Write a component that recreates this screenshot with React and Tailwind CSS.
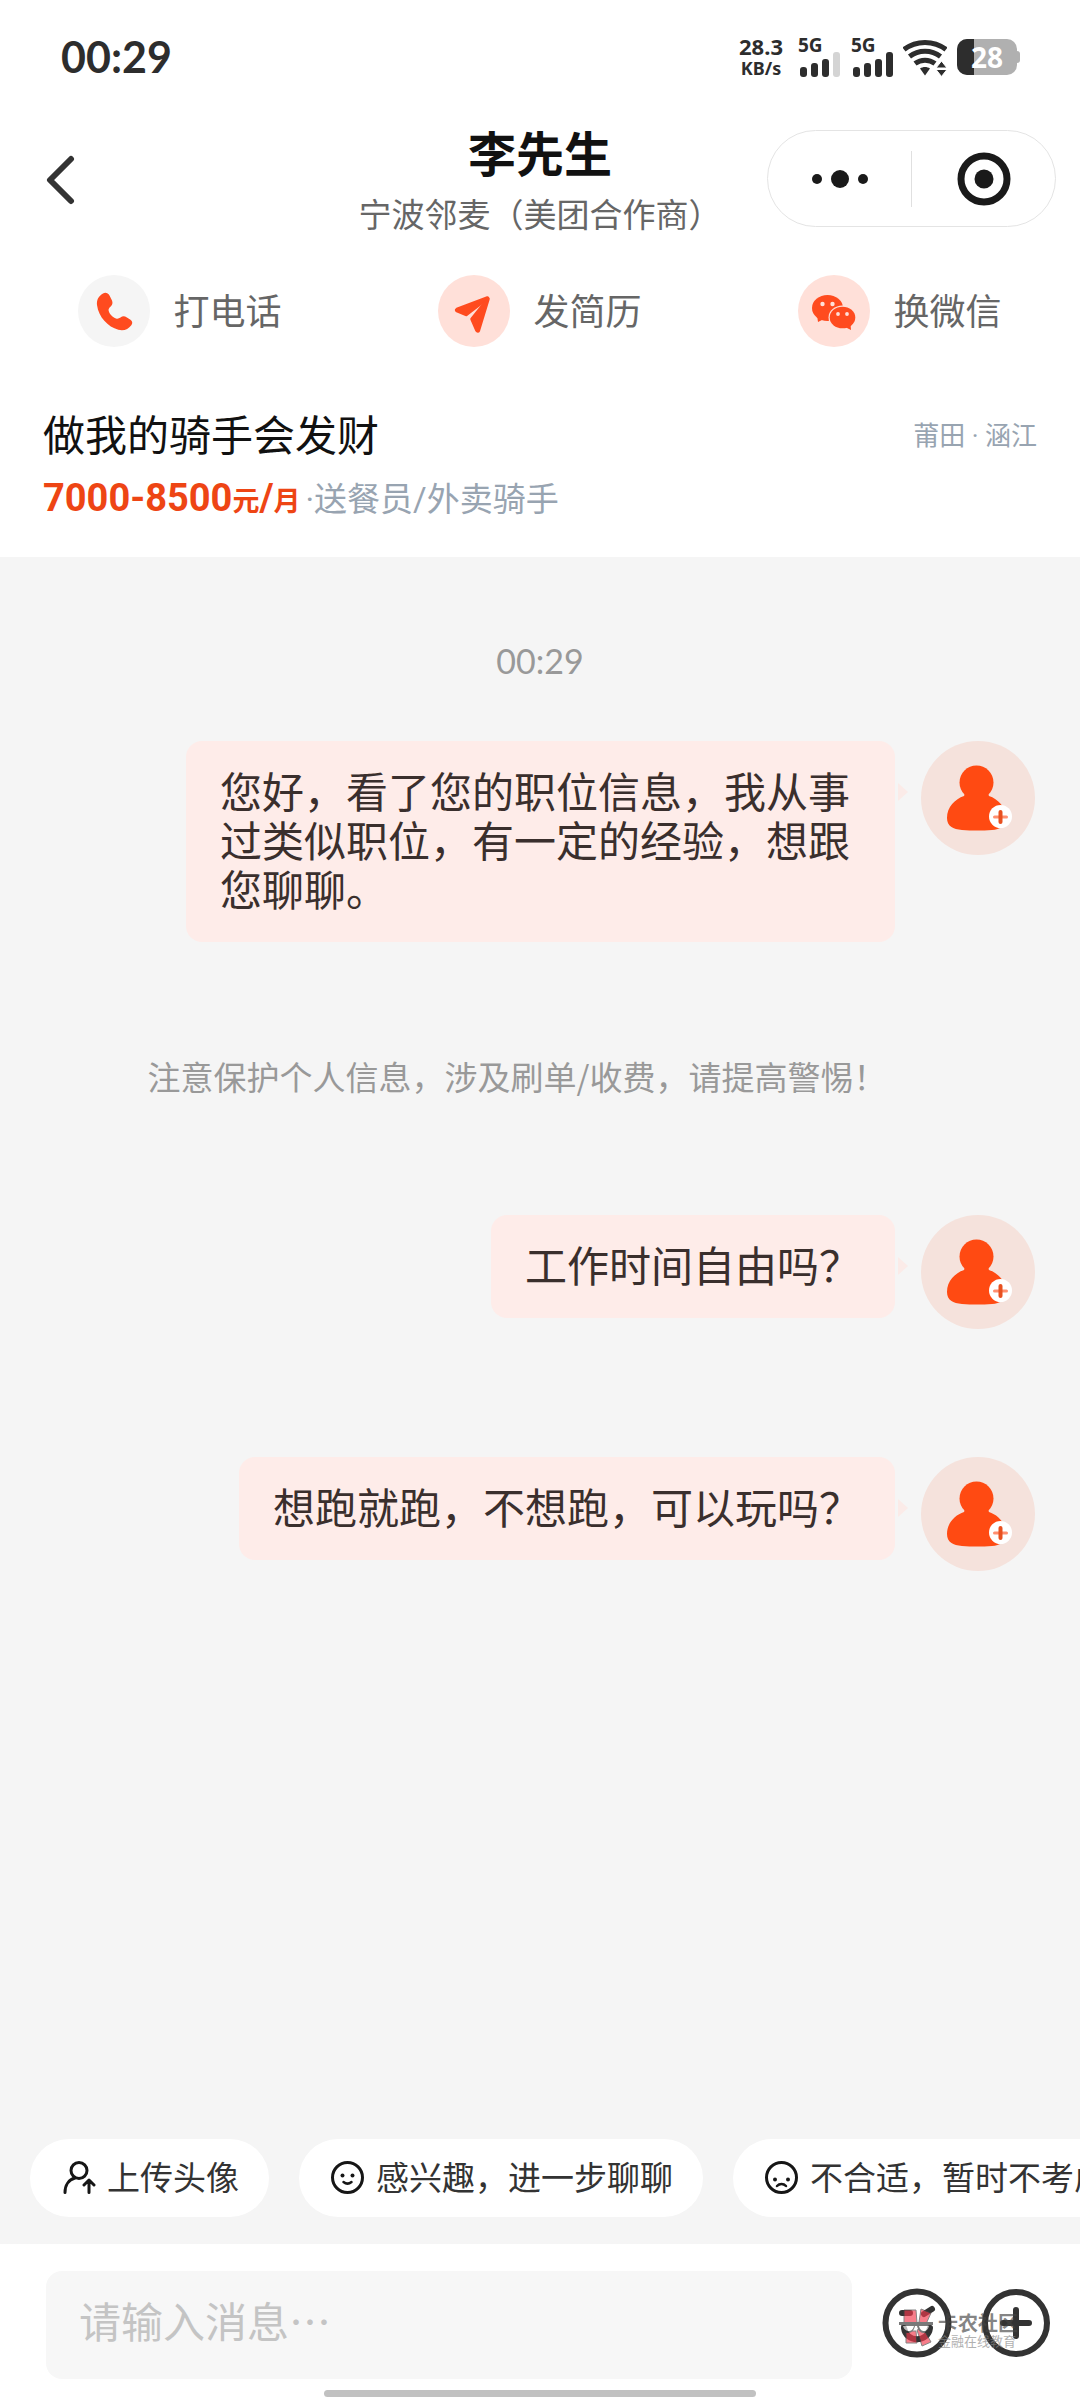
import React from 'react';

function Signal({ active }) {
  const heights = [10, 14, 18, 25];
  return (
    <div className="flex h-10 w-[46px] flex-col justify-between">
      <span className="h-[14px] font-['Noto_Sans',sans-serif] text-[19px] leading-[14px] font-bold">5G</span>
      <svg className="-mt-2 ml-[2px] h-[26px] w-[42px]" viewBox="0 0 42 26" aria-hidden="true">
        {heights.map((h, i) => (
          <rect key={i} x={i * 11} y={25 - h} width="7" height={h} rx="3" fill={i < active ? '#2d2d2d' : '#d4d4d4'} />
        ))}
      </svg>
    </div>
  );
}

function StatusBar() {
  return (
    <div className="flex h-[115px] items-start justify-between pr-[60px] pl-[61px] text-[#2d2d2d]">
      <span className="pt-8 font-['Lato',sans-serif] text-[43px] leading-[50px] font-bold">00:29</span>
      <div className="flex items-start pt-[36px]">
        <div className="-mt-px flex w-[46px] flex-col items-center font-['Noto_Sans',sans-serif] font-bold">
          <span className="text-[22px] leading-[22px]">28.3</span>
          <span className="text-[18px] leading-[22px]">KB/s</span>
        </div>
        <div className="ml-[14px] flex gap-[7px] pt-[2px]">
          <Signal active={3} />
          <Signal active={4} />
        </div>
        <svg className="mt-[3px] ml-[6px] h-[38px] w-[44px]" viewBox="0 0 44 38" fill="none" stroke="#2d2d2d" strokeWidth="5" aria-hidden="true">
          <path d="M1 10.5C13 1 31 1 43 10.5" />
          <path d="M6.500 17.500C15.500 10.500 28.500 10.500 37.500 17.500" />
          <path d="M12 24.500C18 20 26 20 32 24.500" />
          <path d="M17 29.500c3-2 7-2 10 0l-5 7z" fill="#2d2d2d" stroke="none" />
          <path d="M38.500 22l5.500 7h-11zM38.500 37.500l5.500-7h-11z" fill="#2d2d2d" stroke="#fff" strokeWidth="1" />
        </svg>
        <div className="ml-[10px] flex items-center pt-[3px]">
          <div className="relative flex h-9 w-[60px] overflow-hidden rounded-[10px] bg-[#b0b0b0]">
            <div className="w-[17px] bg-[#2d2d2d]" />
            <span className="absolute inset-0 flex items-center justify-center font-['Noto_Sans',sans-serif] text-[28px] leading-9 font-bold text-white">28</span>
          </div>
          <div className="h-3 w-[3px] rounded-r-full bg-[#b0b0b0]" />
        </div>
      </div>
    </div>
  );
}

function Header() {
  return (
    <header className="grid grid-cols-[1fr_auto_1fr] items-start">
      <button type="button" aria-label="返回" className="mt-10 ml-[45px] w-8">
        <svg className="h-[50px] w-8" viewBox="0 0 32 50" fill="none" stroke="#333" strokeWidth="6" strokeLinecap="round" strokeLinejoin="round">
          <path d="M26 4L5 25L26 46" />
        </svg>
      </button>
      <div className="mt-[6px] flex flex-col items-center pb-[2px]">
        <h1 className="text-[48px] leading-[60px] font-bold text-[#111]">李先生</h1>
        <p className="text-[33px] leading-[64px] text-[#666]">宁波邻麦（美团合作商）</p>
      </div>
      <div className="mt-[15px] mr-6 flex h-[97px] w-[289px] items-center justify-self-end rounded-full border border-[#e4e4e4]">
        <button type="button" aria-label="更多" className="flex flex-1 items-center justify-center gap-[9px]">
          <span className="size-[10px] rounded-full bg-[#1a1a1a]" />
          <span className="size-[18px] rounded-full bg-[#1a1a1a]" />
          <span className="size-[10px] rounded-full bg-[#1a1a1a]" />
        </button>
        <span className="h-14 w-px bg-[#e0e0e0]" />
        <button type="button" aria-label="关闭" className="flex flex-1 justify-center">
          <svg className="size-[54px]" viewBox="0 0 54 54">
            <circle cx="27" cy="27" r="23" fill="none" stroke="#1a1a1a" strokeWidth="7" />
            <circle cx="27" cy="27" r="9.5" fill="#1a1a1a" />
          </svg>
        </button>
      </div>
    </header>
  );
}

const PhoneIcon = () => (
  <svg className="size-[72px]" viewBox="0 0 72 72" aria-hidden="true">
    <path
      d="M25 18.500c2.500-1.500 5-.5 6.500 2l2.500 5c1 2.500.3 4.500-1.300 6-1.700 1.500-2.500 2.700-2 4.500 1 3.300 4 6.500 7.300 7.500 1.700.5 3 0 4.500-1 2-1.500 4-1.500 6-.3l4 2.500c2 1.500 2.300 3.300.8 5.500-3 4-7.500 6-13 4.500C30 52 20.500 42 19 30c-.5-5 1.500-9 6-11.500z"
      fill="#ff4b1f"
    />
  </svg>
);

const PlaneIcon = () => (
  <svg className="size-[72px]" viewBox="0 0 72 72" aria-hidden="true">
    <g fill="#ff4b1f" stroke="#ff4b1f" strokeWidth="3.500" strokeLinejoin="round">
      <path d="M49.500 23L19 34.500c-.6.300-.6.900 0 1.200L28 39.500z" />
      <path d="M50 24L34 44l5 11.500c.4.700 1.100.7 1.400 0z" />
    </g>
  </svg>
);

const WechatIcon = () => (
  <svg className="size-[72px]" viewBox="0 0 72 72" aria-hidden="true">
    <g fill="#ff4b1f">
      <ellipse cx="29.500" cy="33" rx="15.500" ry="13" />
      <path d="M19 40l1 7 6-3z" />
    </g>
    <ellipse cx="44.500" cy="42.500" rx="14" ry="12" fill="#ffe0d9" />
    <g fill="#ff4b1f">
      <ellipse cx="44.500" cy="42.500" rx="12.800" ry="10.800" />
      <path d="M47 52l6 3-.5-6z" />
    </g>
    <g fill="#ffe0d9">
      <circle cx="24.500" cy="29" r="2.200" />
      <circle cx="34.500" cy="29" r="2.200" />
      <circle cx="40" cy="39" r="1.900" />
      <circle cx="49" cy="39" r="1.900" />
    </g>
  </svg>
);

function Action({ icon, label, muted }) {
  return (
    <button type="button" className="flex items-center justify-center gap-[23px]">
      <span className={muted ? 'rounded-full bg-[#f5f5f5]' : 'rounded-full bg-[#ffe0d9]'}>{icon}</span>
      <span className="pb-1 text-[36px] leading-[48px] text-[#666]">{label}</span>
    </button>
  );
}

function Avatar() {
  return (
    <svg className="size-[114px] shrink-0" viewBox="0 0 114 114" role="img" aria-label="头像">
      <circle cx="57" cy="57" r="57" fill="#f5e2dc" />
      <circle cx="55.500" cy="41.500" r="17" fill="#ff4a12" />
      <path d="M45 50h21l2 5c9 3 17 11 17 22 0 8-6 11.500-14 12-10 .7-20 .7-30 0-9-.7-15-4-15-12 0-11 8-19 17-22z" fill="#ff4a12" />
      <circle cx="79.500" cy="75.500" r="11.500" fill="#fff" />
      <path d="M73.500 76h12" stroke="#ff8f70" strokeWidth="3" strokeLinecap="round" />
      <path d="M79.500 71v10" stroke="#e8501f" strokeWidth="4" strokeLinecap="round" />
    </svg>
  );
}

function Message({ children, className }) {
  return (
    <div className={`flex items-start justify-end pr-[45px] pl-[186px] ${className}`}>
      <p className="rounded-2xl bg-[#feece9] px-[34px] pt-6 pb-[30px] text-[42px] leading-[49px] text-[#3a2f2d]">{children}</p>
      <svg className="mt-9 mr-[13px] h-[30px] w-[13px] shrink-0" viewBox="0 0 13 30" aria-hidden="true">
        <path d="M3 6L13 15L3 24z" fill="#fbebe8" />
      </svg>
      <Avatar />
    </div>
  );
}

const UploadIcon = () => (
  <svg className="size-9" viewBox="0 0 36 36" fill="none" stroke="#161616" strokeWidth="3" strokeLinecap="round" strokeLinejoin="round" aria-hidden="true">
    <circle cx="19" cy="10.500" r="8" />
    <path d="M5 32.500C5 25 9 19.500 15 18M29 32.500V21M24 25l5-5 5 5" />
  </svg>
);

const FaceIcon = ({ sad }) => (
  <svg className="size-9" viewBox="0 0 36 36" fill="none" stroke="#161616" strokeWidth="3" strokeLinecap="round" aria-hidden="true">
    <circle cx="18.500" cy="17.500" r="15" />
    <circle cx={sad ? 12 : 13.5} cy={sad ? 19.5 : 15.5} r="2" fill="#161616" stroke="none" />
    <circle cx={sad ? 25 : 23.5} cy={sad ? 19.5 : 15.5} r="2" fill="#161616" stroke="none" />
    <path d={sad ? 'M14 26c2.500-2.700 6.500-2.700 9 0' : 'M14.500 22c2.500 2 5.500 2 8 0'} strokeWidth="2.500" />
  </svg>
);

function Chip({ icon, children }) {
  return (
    <button type="button" className="flex h-[78px] shrink-0 items-center gap-[11px] rounded-full bg-white px-[30px] text-[33px] leading-[48px] whitespace-nowrap text-[#333]">
      {icon}
      <span className="pb-1">{children}</span>
    </button>
  );
}

function Watermark() {
  return (
    <div className="pointer-events-none absolute top-[37px] left-[16px] flex items-start gap-[4px] opacity-65">
      <svg className="h-[42px] w-9" viewBox="0 0 36 42" aria-hidden="true">
        <g fill="#f4384c" stroke="#444" strokeWidth="1">
          <path d="M6 2h12l1 13H6zM23 1l10 4-5 11-7-2z" />
          <path d="M8 23h10l1 12H8zM19 22l6-2 8 14-9 4z" />
        </g>
        <path d="M1 14h34v3h-2c0 5-3 8-7 8s-6-3-7-7h-2c-1 4-3 7-7 7s-7-3-7-8H1z" fill="#333" />
        <path d="M5 18h11c-1 4-3 5-5 5s-5-1-6-5zM21 18h10c-1 4-3 5-5 5s-4-1-5-5z" fill="#fff" />
      </svg>
      <div className="flex flex-col pt-[5px] whitespace-nowrap">
        <span className="text-[20px] leading-[20px] font-bold text-[#444]">卡农社区</span>
        <span className="text-[13px] leading-[16px] text-[#888]">金融在线教育</span>
      </div>
    </div>
  );
}

export default function App() {
  return (
    <div className="flex min-h-screen w-full flex-col overflow-hidden bg-white font-['Noto_Sans_CJK_SC',sans-serif]">
      <StatusBar />
      <Header />
      <nav className="mt-7 grid grid-cols-3">
        <Action icon={<PhoneIcon />} label="打电话" muted />
        <Action icon={<PlaneIcon />} label="发简历" />
        <Action icon={<WechatIcon />} label="换微信" />
      </nav>
      <section className="mt-[60px] px-[43px] pb-[22px]">
        <div className="flex items-center justify-between">
          <h2 className="text-[42px] leading-[52px] text-[#111]">做我的骑手会发财</h2>
          <span className="pt-[6px] font-['Roboto','Noto_Sans_CJK_SC',sans-serif] text-[26px] leading-[40px] text-[#98a4b1]">莆田 · 涵江</span>
        </div>
        <div className="flex h-[76px] items-center gap-[5px] pt-[6px] font-['Roboto','Noto_Sans_CJK_SC',sans-serif] text-[33px] leading-[48px] text-[#98a4b1]">
          <strong className="text-[38px] font-bold text-[#ee4514]">
            7000-8500<span className="text-[27px]">元</span>/<span className="text-[27px]">月</span>
          </strong>
          <span>·送餐员/外卖骑手</span>
        </div>
      </section>

      <main className="flex-1 bg-[#f5f5f5] pt-20">
        <p className="text-center font-['Lato',sans-serif] text-[34px] leading-[48px] text-[#999]">00:29</p>
        <Message className="mt-14">您好，看了您的职位信息，我从事过类似职位，有一定的经验，想跟您聊聊。</Message>
        <p className="mt-[110px] pr-[46px] text-center text-[33px] leading-[48px] text-[#999]">注意保护个人信息，涉及刷单/收费，请提高警惕！</p>
        <Message className="mt-[115px]">工作时间自由吗？</Message>
        <Message className="mt-32">想跑就跑，不想跑，可以玩吗？</Message>
      </main>

      <div className="flex gap-[30px] overflow-hidden bg-[#f5f5f5] pb-[27px] pl-[30px]">
        <Chip icon={<UploadIcon />}>上传头像</Chip>
        <Chip icon={<FaceIcon />}>感兴趣，进一步聊聊</Chip>
        <Chip icon={<FaceIcon sad />}>不合适，暂时不考虑</Chip>
      </div>

      <footer className="bg-white pt-[27px]">
        <div className="flex items-center pr-[29px] pl-[46px]">
          <input
            type="text"
            aria-label="消息"
            placeholder="请输入消息…"
            className="h-[108px] min-w-0 flex-1 rounded-2xl bg-[#f7f7f7] px-[33px] pb-[12px] text-[42px] text-[#333] outline-none placeholder:text-[#c4c4c4]"
          />
          <div className="relative ml-[30px] flex h-[108px] items-center gap-[29px] pb-[5px]">
            <button type="button" aria-label="表情">
              <svg className="size-[70px]" viewBox="0 0 70 70" fill="none" stroke="#333" strokeWidth="6" strokeLinecap="round">
                <circle cx="35" cy="35" r="31.500" />
                <path d="M20 25h8M42 26l8-5M22 40c2 15 24 15 26 0" />
              </svg>
            </button>
            <button type="button" aria-label="添加">
              <svg className="size-[70px]" viewBox="0 0 70 70" fill="none" stroke="#333" strokeWidth="6" strokeLinecap="round">
                <circle cx="35" cy="35" r="31" />
                <path d="M35 22v26M22 35h26" />
              </svg>
            </button>
            <Watermark />
          </div>
        </div>
        <div className="mx-auto mt-[11px] mb-[3px] h-[7px] w-2/5 rounded-full bg-[#c1c1c1]" />
      </footer>
    </div>
  );
}
